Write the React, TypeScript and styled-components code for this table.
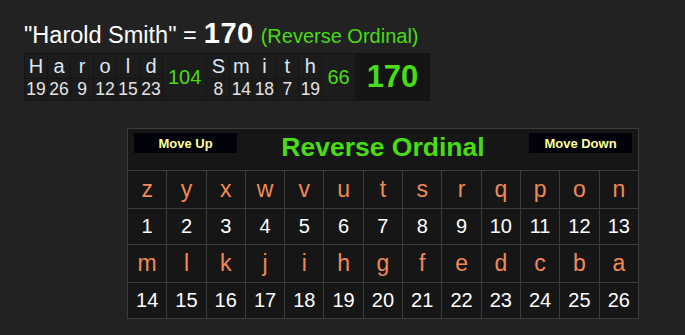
import styled, { createGlobalStyle } from "styled-components";

const GlobalStyle = createGlobalStyle`
    html, body {
        margin:0;
        padding:0;
        background-color:#222222;
    }
    body{
        font-family:"Liberation Sans", Arial, sans-serif;
    }
`;

const Page = styled.div`
    width:685px;
    height:335px;
    padding:17px 0 0 24px;
    box-sizing:border-box;
    background-color:#222222;
`;

const Heading = styled.div`
    display:flex;
    align-items:baseline;
    gap:7px;
    height:33px;
    color:#ffffff;
    font-size:23.5px;
    white-space:nowrap;
`;

const HeadingTotal = styled.span`
    font-size:29px;
    font-weight:bold;
    letter-spacing:0.5px;
`;

const HeadingCipher = styled.span`
    color:#47dc14;
    font-size:20px;
`;

const Breakdown = styled.table`
    margin-top:3px;
    border-collapse:collapse;
    background-color:#1c1c1c;
`;

const LetterCell = styled.td<{ $row: "top" | "bottom" }>`
    padding:0 1px;
    width:20px;
    height:${p => p.$row == "top" ? "24px" : "21px"};
    border:1px solid #151515;
    text-align:center;
    color:${p => p.$row == "top" ? "#dce8f4" : "#e4e4e4"};
    font-size:${p => p.$row == "top" ? "20px" : "17.5px"};
    line-height:1;
    vertical-align:middle;
`;

const SumCell = styled.td<{ $total?: boolean }>`
    padding:${p => p.$total ? "0 11px" : "0 5px"};
    border:1px solid #151515;
    background-color:${p => p.$total ? "#141414" : "#1c1c1c"};
    color:#47dc14;
    font-size:${p => p.$total ? "31px" : "20px"};
    font-weight:${p => p.$total ? "bold" : "normal"};
    text-align:center;
    vertical-align:middle;
`;

const Chart = styled.table`
    margin:27px 0 0 103px;
    width:512px;
    border-collapse:collapse;
    table-layout:fixed;
    background-color:#161616;
`;

const HeaderCell = styled.td`
    height:41px;
    padding:0;
    border:1px solid #3c3c3c;
`;

const HeaderBar = styled.div`
    display:flex;
    justify-content:space-between;
    align-items:flex-start;
    height:41px;
    padding:4px 6px 0 6px;
    box-sizing:border-box;
`;

const MoveButton = styled.div`
    width:103px;
    height:20px;
    display:flex;
    align-items:center;
    justify-content:center;
    background-color:#02020a;
    color:#ffff99;
    font-size:13px;
    font-weight:bold;
`;

const ChartTitle = styled.div`
    margin-top:-1px;
    color:#47dc14;
    font-size:26.5px;
    font-weight:bold;
`;

const ChartCell = styled.td<{ $kind: "letter" | "number" }>`
    height:${p => p.$kind == "letter" ? "37px" : "35px"};
    padding:0;
    border:1px solid #3c3c3c;
    text-align:center;
    vertical-align:middle;
    color:${p => p.$kind == "letter" ? "#f08a55" : "#ffffff"};
    font-size:${p => p.$kind == "letter" ? "23px" : "20px"};
`;

const alphabet = "abcdefghijklmnopqrstuvwxyz",
    reverseValue = (ch: string) => 26 - alphabet.indexOf(ch.toLowerCase()),
    words = ["Harold", "Smith"];

const App = () => {
    const wordTotals = words.map(w => w.split("").reduce((s, c) => s + reverseValue(c), 0)),
        total = wordTotals.reduce((a, b) => a + b, 0),
        reversed = alphabet.split("").reverse(),
        rows = [reversed.slice(0, 13), reversed.slice(13)];

    return(
        <Page>
            <GlobalStyle />
            <Heading>
                <span>"{words.join(" ")}" =</span>
                <HeadingTotal>{total}</HeadingTotal>
                <HeadingCipher>(Reverse Ordinal)</HeadingCipher>
            </Heading>

            <Breakdown>
                <tbody>
                    <tr>
                        {
                            words.map((w, wi) => [
                                ...w.split("").map((c, ci) => (
                                    <LetterCell $row="top" key={wi + "-" + ci}>{c}</LetterCell>
                                )),
                                <SumCell rowSpan={2} key={"sum" + wi}>{wordTotals[wi]}</SumCell>
                            ])
                        }
                        <SumCell rowSpan={2} $total>{total}</SumCell>
                    </tr>
                    <tr>
                        {
                            words.map((w, wi) =>
                                w.split("").map((c, ci) => (
                                    <LetterCell $row="bottom" key={wi + "-" + ci}>{reverseValue(c)}</LetterCell>
                                ))
                            )
                        }
                    </tr>
                </tbody>
            </Breakdown>

            <Chart>
                <tbody>
                    <tr>
                        <HeaderCell colSpan={13}>
                            <HeaderBar>
                                <MoveButton>Move Up</MoveButton>
                                <ChartTitle>Reverse Ordinal</ChartTitle>
                                <MoveButton>Move Down</MoveButton>
                            </HeaderBar>
                        </HeaderCell>
                    </tr>
                    {
                        rows.map((row, ri) => [
                            <tr key={"l" + ri}>
                                {row.map(c => <ChartCell $kind="letter" key={c}>{c}</ChartCell>)}
                            </tr>,
                            <tr key={"n" + ri}>
                                {row.map(c => <ChartCell $kind="number" key={c}>{reverseValue(c)}</ChartCell>)}
                            </tr>
                        ])
                    }
                </tbody>
            </Chart>
        </Page>
    )
}

export default App;
